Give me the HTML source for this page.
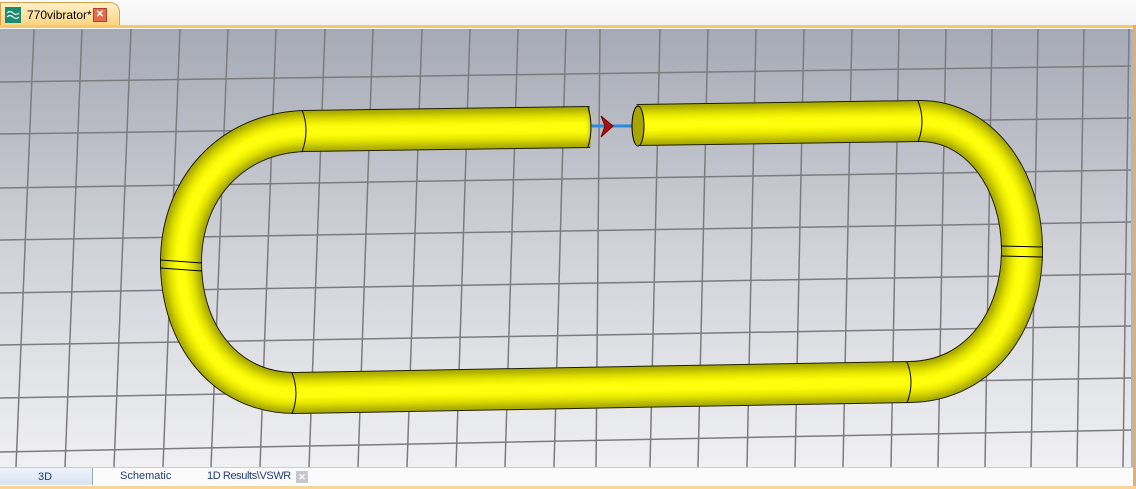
<!DOCTYPE html>
<html><head><style>
body{margin:0;width:1136px;height:488px;overflow:hidden;background:#f7f6f4;font-family:"Liberation Sans",sans-serif;position:relative}
.tabbar{position:absolute;left:0;top:0;width:1136px;height:25px;background:linear-gradient(#fbfbfb,#f3f3f3)}
.tab{position:absolute;left:0;top:2px;width:118px;height:24px;background:linear-gradient(#fff0c8,#fcd27a);border:1px solid #d9a24a;border-bottom:none;border-radius:0 10px 0 0}
.oline{position:absolute;left:0;top:25px;width:1136px;height:3px;background:#f6c86e}
.view{position:absolute;left:0;top:29px;width:1131px;height:438px;border-right:2px solid #aab6c8}
.rb{position:absolute;right:0;top:25px;width:3px;height:463px;background:#e0b070}
.bot{position:absolute;left:0;top:467px;width:1133px;height:21px;background:#fbfbfb;border-top:1px solid #c8d0dc;font-size:11px;color:#1e3c78}
</style></head><body>
<div class="tabbar"></div>
<div class="tab">
<div style="position:absolute;left:4px;top:4px;width:16px;height:16px;background:#1a8a70"><svg width="16" height="16"><path d="M2,6 q3,-3 6,0 t6,0 M2,10 q3,-3 6,0 t6,0" stroke="#fff" fill="none" stroke-width="1.2"/></svg></div>
<div style="position:absolute;left:26px;top:5px;font-size:12px;color:#000">770vibrator*</div>
<div style="position:absolute;left:92px;top:5px;width:12px;height:12px;background:#e36a4a;border:1px solid #b04030;color:#fff;font-size:10px;line-height:12px;text-align:center;font-weight:bold">✕</div>
</div>
<div class="oline"></div>
<div class="view">
<svg width="1131" height="438" viewBox="0 29 1131 438" style="display:block">
<defs><linearGradient id="bg" x1="0" y1="0" x2="0" y2="1"><stop offset="0" stop-color="#a6aab5"/><stop offset="0.5" stop-color="#d0d2d8"/><stop offset="1" stop-color="#f0f0f3"/></linearGradient>
<path id="p" d="M590,127 L305,131 C230,133 181,190 181,262 C181,335 225,393 295,393 L910,382 C980,381 1022,320 1022,250 C1022,180 980,121 920,121 L637,125"/>
<filter id="bl"><feGaussianBlur stdDeviation="2.5"/></filter></defs>
<rect x="0" y="29" width="1131" height="438" fill="url(#bg)"/>
<g stroke="#7c7c80" stroke-width="1.5">
<line x1="34" y1="29" x2="16" y2="467"/><line x1="82" y1="29" x2="65" y2="467"/><line x1="131" y1="29" x2="114" y2="467"/><line x1="180" y1="29" x2="163" y2="467"/><line x1="228" y1="29" x2="211" y2="467"/><line x1="276" y1="29" x2="260" y2="467"/><line x1="325" y1="29" x2="309" y2="467"/><line x1="373" y1="29" x2="358" y2="467"/><line x1="422" y1="29" x2="407" y2="467"/><line x1="470" y1="29" x2="456" y2="467"/><line x1="518" y1="29" x2="505" y2="467"/><line x1="566" y1="29" x2="554" y2="467"/><line x1="600" y1="29" x2="596" y2="467"/><line x1="660" y1="29" x2="650" y2="467"/><line x1="708" y1="29" x2="698" y2="467"/><line x1="756" y1="29" x2="747" y2="467"/><line x1="804" y1="29" x2="795" y2="467"/><line x1="852" y1="29" x2="843" y2="467"/><line x1="899" y1="29" x2="891" y2="467"/><line x1="946" y1="29" x2="938" y2="467"/><line x1="992" y1="29" x2="985" y2="467"/><line x1="1038" y1="29" x2="1031" y2="467"/><line x1="1084" y1="29" x2="1077" y2="467"/><line x1="1129" y1="29" x2="1123" y2="467"/>
<line x1="0" y1="82" x2="1131" y2="66"/><line x1="0" y1="134" x2="1131" y2="118"/><line x1="0" y1="188" x2="1131" y2="170"/><line x1="0" y1="240" x2="1131" y2="222"/><line x1="0" y1="293" x2="1131" y2="274"/><line x1="0" y1="345" x2="1131" y2="326"/><line x1="0" y1="398" x2="1131" y2="378"/><line x1="0" y1="452" x2="1131" y2="430"/>
</g>
<g fill="none" stroke-linecap="butt">
<use href="#p" stroke="#1a1a00" stroke-width="42"/>
<use href="#p" stroke="#a8a800" stroke-width="40"/>
<g filter="url(#bl)">
<use href="#p" stroke="#d2d200" stroke-width="32"/>
<use href="#p" stroke="#eeee00" stroke-width="22"/>
<use href="#p" stroke="#ffff10" stroke-width="12"/>
</g>
</g>
<g fill="none" stroke="#000" stroke-width="1">
<path d="M302,110 q8,20 0,42"/><path d="M918,101 q8,20 0,41"/><path d="M292,373 q8,20 0,41"/><path d="M907,362 q8,20 0,41"/>
<path d="M160,260 l42,3 M160,268 l42,3"/><path d="M1001,246 l42,1 M1001,256 l42,1"/>
<path d="M588,107 q6,20 0,40"/>
</g>
<line x1="592" y1="126" x2="638" y2="126" stroke="#2a8ae0" stroke-width="3"/>
<path d="M601,116 l12,10 l-12,11 l4,-11z" fill="#a81010" stroke="#700" stroke-width="1"/>
<ellipse cx="638" cy="126" rx="6" ry="20" fill="#a8a400" stroke="#000" stroke-width="1"/>
</svg>
</div>
<div class="rb"></div>
<div class="bot">
<div style="position:absolute;left:0;top:0;width:92px;height:17px;background:linear-gradient(#eef3fa,#d8e4f2);border-right:1px solid #9ab"></div>
<div style="position:absolute;left:38px;top:3px">3D</div>
<div style="position:absolute;left:120px;top:2px">Schematic</div>
<div style="position:absolute;left:207px;top:2px;letter-spacing:-0.4px">1D Results\VSWR</div>
<div style="position:absolute;left:296px;top:3px;width:12px;height:12px;background:#c4c8cc;color:#fff;font-size:9px;line-height:12px;text-align:center;font-weight:bold">✕</div>
<div style="position:absolute;left:0;top:18px;width:1136px;height:3px;background:#f6d49a"></div>
</div>
</body></html>
